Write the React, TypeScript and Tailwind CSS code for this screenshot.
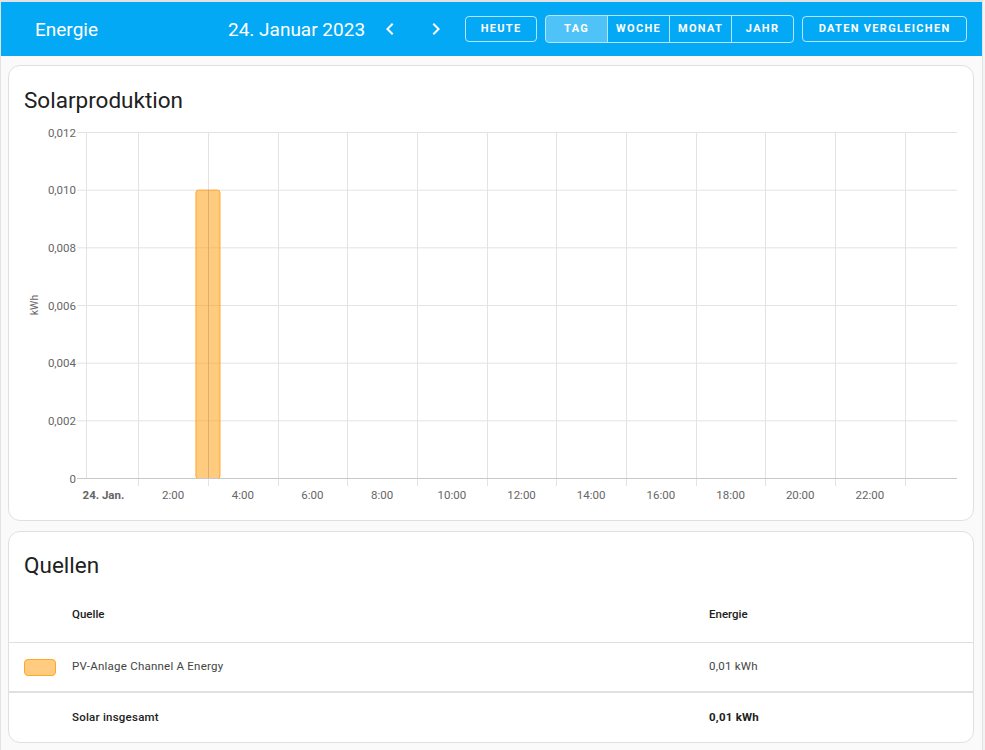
import React from 'react';

const FONT = { fontFamily: 'Roboto, "Noto Sans", sans-serif' };

// chart geometry (svg coordinates, svg placed at page x=9, y=116)
const PLOT_L = 77;
const PLOT_R = 948;
const PLOT_T = 16;
const PLOT_B = 362;
const HOUR = (PLOT_R - PLOT_L) / 25;
const hourX = (h: number) => PLOT_L + (h + 0.5) * HOUR;

const yTicks = ['0,012', '0,010', '0,008', '0,006', '0,004', '0,002', '0'];
const xLabels = [
  '24. Jan.', '2:00', '4:00', '6:00', '8:00', '10:00', '12:00',
  '14:00', '16:00', '18:00', '20:00', '22:00',
];

function SolarChart() {
  const step = (PLOT_B - PLOT_T) / 6;
  const barTop = PLOT_T + step;
  const barX = hourX(3) - 12.5;

  return (
    <svg width={964} height={400} className="block" style={FONT}>
      {yTicks.map((t, i) => {
        const y = PLOT_T + i * step + 0.5;
        return (
          <g key={t}>
            <line x1={68} x2={PLOT_R} y1={y} y2={y} stroke={i === 6 ? '#c8c8c8' : '#e3e3e3'} strokeWidth={1} />
            <text x={67} y={y + 4} textAnchor="end" fontSize={11.5} fill="#666">{t}</text>
          </g>
        );
      })}
      <line x1={PLOT_L + 0.5} x2={PLOT_L + 0.5} y1={PLOT_T} y2={PLOT_B} stroke="#e3e3e3" />
      {Array.from({ length: 12 }, (_, i) => 2 * i + 1).map((h) => {
        const x = Math.round(hourX(h)) + 0.5;
        return <line key={h} x1={x} x2={x} y1={PLOT_T} y2={PLOT_B + 8} stroke="#e3e3e3" />;
      })}
      <rect
        x={barX + 0.5}
        y={barTop + 0.5}
        width={24}
        height={PLOT_B - barTop}
        rx={2.5}
        fill="rgba(255,152,0,0.5)"
        stroke="#ffa726"
        strokeWidth={1}
      />
      <line x1={Math.round(hourX(3)) + 0.5} x2={Math.round(hourX(3)) + 0.5} y1={barTop} y2={PLOT_B} stroke="rgba(0,0,0,0.08)" />
      <line x1={PLOT_L} x2={PLOT_R} y1={PLOT_B + 0.5} y2={PLOT_B + 0.5} stroke="#c8c8c8" />
      {xLabels.map((l, i) => (
        <text
          key={l}
          x={hourX(i * 2)}
          y={PLOT_B + 21}
          textAnchor="middle"
          fontSize={11.5}
          fontWeight={i === 0 ? 700 : 400}
          fill="#666"
        >
          {l}
        </text>
      ))}
      <text x={29} y={189} fontSize={10.5} fill="#666" textAnchor="middle" transform="rotate(-90 29 189)">kWh</text>
    </svg>
  );
}

function ChevronLeft() {
  return (
    <svg width="24" height="24" viewBox="0 0 24 24" fill="white">
      <path d="M15.41,16.58L10.83,12L15.41,7.41L14,6L8,12L14,18L15.41,16.58Z" />
    </svg>
  );
}

function ChevronRight() {
  return (
    <svg width="24" height="24" viewBox="0 0 24 24" fill="white">
      <path d="M8.59,16.58L13.17,12L8.59,7.41L10,6L16,12L10,18L8.59,16.58Z" />
    </svg>
  );
}

export default function App() {
  const btn = 'h-[26px] flex items-center justify-center text-[11px] font-bold tracking-[0.12em] text-white';
  const periods = ['TAG', 'WOCHE', 'MONAT', 'JAHR'];

  return (
    <div className="w-[985px] h-[750px] bg-[#f3f3f3] overflow-hidden" style={FONT}>
      <div className="w-[983px] h-[750px] bg-[#fafafa] border-t-2 border-l border-r border-[#e2e2e2]">
        <div className="h-[54px] bg-[#03a9f4] flex items-center text-white">
          <div className="pl-[34px] w-[227px] text-[19px] pt-[2px]">Energie</div>
          <div className="text-[19px] pt-[2px]">24. Januar 2023</div>
          <div className="ml-[13px] flex items-center gap-[22px]">
            <ChevronLeft />
            <ChevronRight />
          </div>
          <div className="ml-[17px] flex items-center">
            <div className={`${btn} w-[72px] border border-white/70 rounded-[4px]`}>HEUTE</div>
            <div className="ml-[8px] flex border border-white/70 rounded-[4px] overflow-hidden">
              {periods.map((p, i) => (
                <div
                  key={p}
                  className={`${btn} h-[24px] ${i === 0 ? 'w-[61px] bg-white/30' : 'w-[62px] border-l border-white/70'}`}
                >
                  {p}
                </div>
              ))}
            </div>
            <div className={`${btn} ml-[8px] w-[165px] border border-white/70 rounded-[4px]`}>DATEN VERGLEICHEN</div>
          </div>
        </div>

        <div className="px-[7px] pt-[9px] flex flex-col gap-[10px]">
          <div className="w-[966px] h-[456px] bg-white border border-[#e0e0e0] rounded-[12px]">
            <div className="pt-[18px] pl-[15px] h-[50px] text-[22.5px] leading-[32px] text-[#212121]">Solarproduktion</div>
            <SolarChart />
          </div>

          <div className="w-[966px] h-[212px] bg-white border border-[#e0e0e0] rounded-[12px] overflow-hidden">
            <div className="pt-[17px] pl-[15px] h-[56px] text-[22.5px] leading-[32px] text-[#212121]">Quellen</div>
            <div className="h-[55px] flex items-center border-b border-[#e0e0e0] text-[11.5px] font-medium text-[#212121]">
              <div className="w-[63px]" />
              <div className="w-[637px]">Quelle</div>
              <div>Energie</div>
            </div>
            <div className="h-[50px] flex items-center border-b-2 border-[#e0e0e0] text-[11.5px] text-[#444]">
              <div className="w-[63px] pl-[15px]">
                <div className="w-[32px] h-[17px] rounded-[4px] bg-[#ffcc80] border border-[#ffa726]" />
              </div>
              <div className="w-[637px] tracking-[0.02em]">PV-Anlage Channel A Energy</div>
              <div className="tracking-[0.02em]">0,01 kWh</div>
            </div>
            <div className="h-[49px] flex items-center text-[11.5px] font-medium text-[#212121]">
              <div className="w-[63px]" />
              <div className="w-[637px] tracking-[0.02em]">Solar insgesamt</div>
              <div className="font-bold tracking-[0.02em]">0,01 kWh</div>
            </div>
          </div>
        </div>
      </div>
    </div>
  );
}
